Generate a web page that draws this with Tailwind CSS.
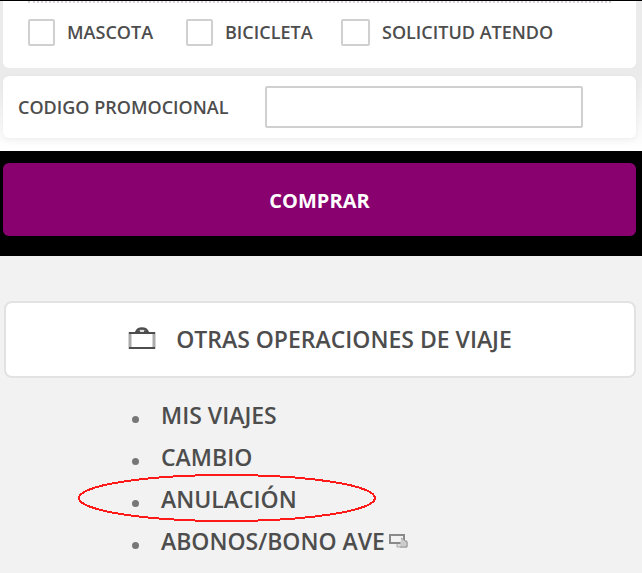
<!DOCTYPE html>
<html lang="es">
<head>
    <meta charset="UTF-8">
    <meta name="viewport" content="width=device-width, initial-scale=1.0">
    <title>Comprar</title>
    <script src="https://cdn.jsdelivr.net/npm/@tailwindcss/browser@4"></script>
</head>
<body class="bg-[#f2f2f2] font-['Open_Sans','Noto_Sans',sans-serif] text-[#4d4d4d]">
    <form>
        <!-- Trip options -->
        <div class="border-t border-black bg-linear-to-b from-[#ebebeb] via-[#ebebeb] to-white pr-1.5 pl-[3px] pb-[13px]">
            <div class="h-[67px] rounded-b-md bg-white pr-[25px] pl-[25px]">
                <div class="border-t-2 border-dotted border-[#d8d0d8]"></div>
                <div class="flex pt-4 text-lg font-semibold">
                    <label class="flex w-[158px] gap-3 leading-[27px]">
                        <input type="checkbox" class="size-[27px] shrink-0 appearance-none rounded-xs border-2 border-[#d0d0d0] bg-white">
                        MASCOTA
                    </label>
                    <label class="flex w-[155px] gap-3 leading-[27px]">
                        <input type="checkbox" class="size-[27px] shrink-0 appearance-none rounded-xs border-2 border-[#d0d0d0] bg-white">
                        BICICLETA
                    </label>
                    <label class="flex gap-3 whitespace-nowrap leading-[27px]">
                        <input type="checkbox" class="h-[27px] w-[29px] shrink-0 appearance-none rounded-xs border-2 border-[#d0d0d0] bg-white">
                        SOLICITUD ATENDO
                    </label>
                </div>
            </div>

            <!-- Promo code -->
            <div class="mt-2 flex h-[62px] items-center rounded-md bg-white pr-[53px] pl-[15px] shadow-[0_2px_6px_rgba(0,0,0,0.06)]">
                <label for="promo" class="w-[247px] shrink-0 text-lg font-semibold">CODIGO PROMOCIONAL</label>
                <input id="promo" type="text" class="h-[42px] min-w-0 flex-1 rounded-xs border-2 border-[#d0d0d0] bg-white px-2">
            </div>
        </div>

        <!-- Buy button -->
        <div class="bg-black pt-3 pr-1.5 pb-5 pl-[3px]">
            <button type="submit" class="block h-[73px] w-full rounded-md bg-[#89006f] pt-0.5 text-xl font-bold text-white">COMPRAR</button>
        </div>
    </form>

    <!-- Other operations -->
    <section class="pt-[45px] pr-1.5 pl-1">
        <h2 class="flex h-[77px] items-center justify-center gap-5 rounded-lg border-2 border-[#e2e2e2] bg-white text-[23px] font-semibold">
            <svg class="mb-1 h-6 w-7" viewBox="0 0 28 24" fill="none" stroke="currentColor">
                <path d="M8 6C10 1 18 1 20 6Z" fill="#777" stroke-width="2"></path>
                <path d="M12 5H16" stroke="#ddd" stroke-width="2"></path>
                <path d="M2 6V23M26 6V23" stroke="#aaa" stroke-width="3"></path>
                <path d="M1 7H27M1 22H27" stroke-width="2"></path>
            </svg>
            OTRAS OPERACIONES DE VIAJE
        </h2>
        <ul class="pt-4 pl-[128px] text-[23px] font-semibold leading-[42px]">
            <li class="flex items-center gap-[22px]">
                <span class="mt-2 size-[7px] rounded-full bg-[#777]"></span>
                <a href="#">MIS VIAJES</a>
            </li>
            <li class="flex items-center gap-[22px]">
                <span class="mt-2 size-[7px] rounded-full bg-[#777]"></span>
                <a href="#">CAMBIO</a>
            </li>
            <li class="relative flex items-center gap-[22px]">
                <span class="mt-2 size-[7px] rounded-full bg-[#777]"></span>
                <a href="#">ANULACIÓN</a>
                <!-- Highlight ring -->
                <svg class="pointer-events-none absolute -top-1 -left-[54px] h-12 w-[298px]" viewBox="0 0 298 48" fill="none" shape-rendering="crispEdges">
                    <ellipse cx="149" cy="24" rx="148" ry="23" stroke="#ff1a1a" stroke-width="2"></ellipse>
                </svg>
            </li>
            <li class="flex items-center gap-[22px]">
                <span class="mt-2 size-[7px] rounded-full bg-[#777]"></span>
                <a href="#" class="flex items-center gap-1">
                    ABONOS/BONO AVE
                    <svg class="h-4 w-5" viewBox="0 0 20 16" fill="none">
                        <path d="M5 8H18V14H8V11" fill="#ddd" stroke="#aaa"></path>
                        <path d="M1 2H15V10H1Z" fill="#f2f2f2" stroke="#8a8a8a" stroke-width="2"></path>
                        <path d="M12 5L18 9V14H11" fill="#ccc" stroke="#999"></path>
                    </svg>
                </a>
            </li>
        </ul>
    </section>
</body>
</html>
